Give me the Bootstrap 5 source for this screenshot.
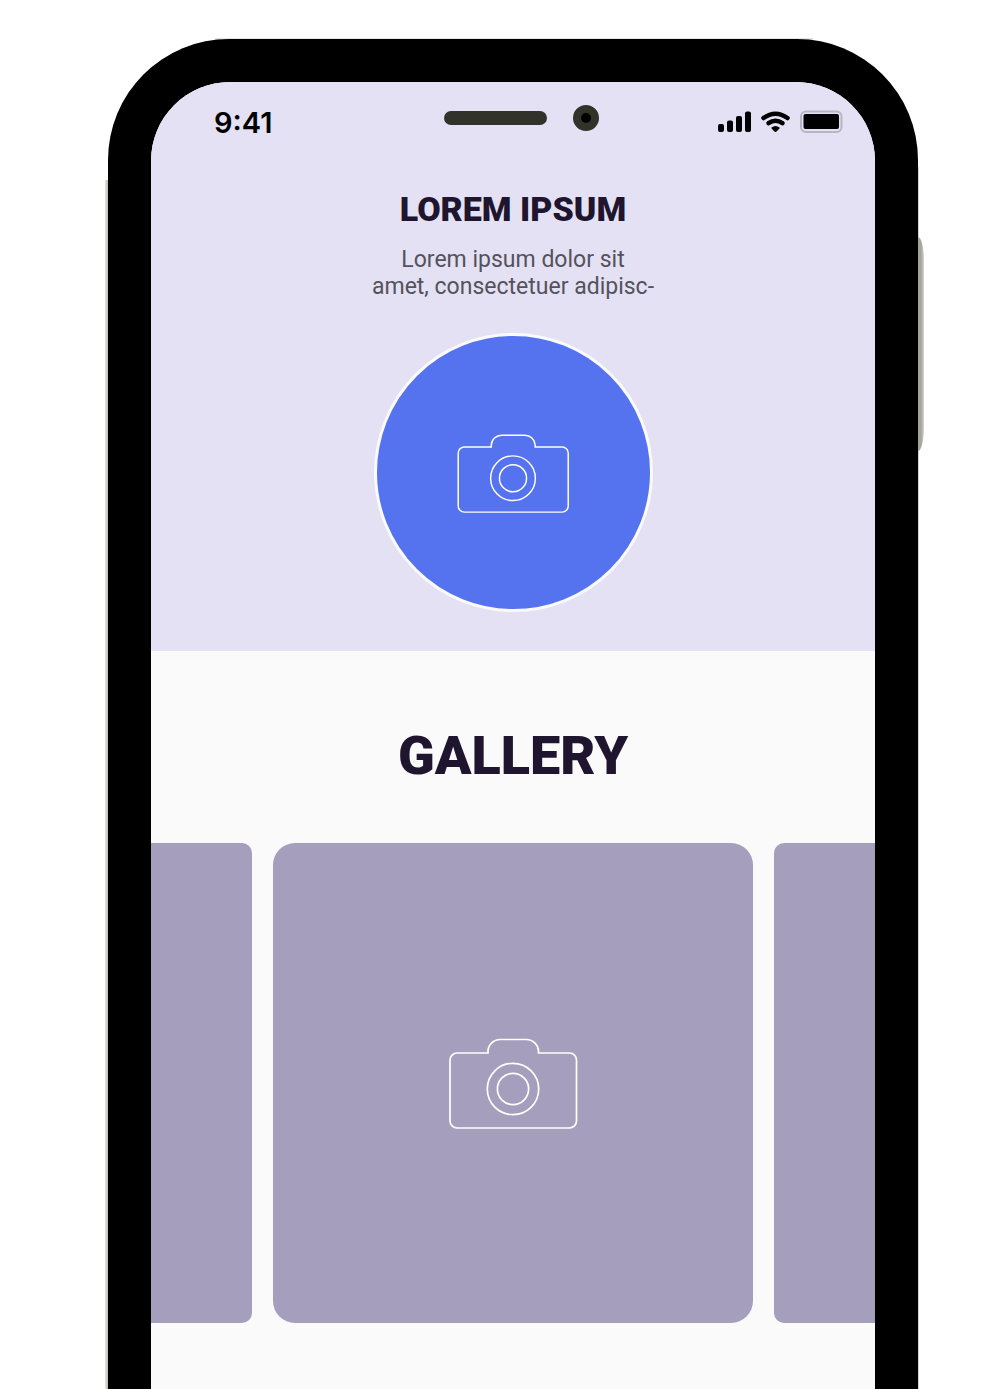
<!DOCTYPE html>
<html lang="en">
<head>
<meta charset="utf-8">
<meta name="viewport" content="width=device-width, initial-scale=1">
<title>Gallery</title>
<link href="https://cdn.jsdelivr.net/npm/bootstrap@5.3.0/dist/css/bootstrap.min.css" rel="stylesheet">
<style>
body { background: #fff; font-family: Roboto, "Liberation Sans", sans-serif; }
.stage { padding: 39px 90px 0 108px; min-height: 100vh; }
.device { isolation: isolate; }
.phone { background: #000; padding: 43px 43px 0; border-radius: 121px 121px 0 0; }
.edge { position: absolute; z-index: -1; }
.edge-top { top: -1px; left: 107px; right: 105px; height: 40px; background: #e4e4e0; }
.edge-left { left: -3px; top: 141px; bottom: 0; width: 4px; background: linear-gradient(90deg, #e6e6e3, #a9aba3); }
.edge-right { right: -1px; top: 128px; bottom: 0; width: 2px; background: #d3d3cf; }
.side-key { right: -6px; top: 198px; width: 12px; height: 214px; background: linear-gradient(90deg, #a5a59c 75%, #d4d4cf); border-radius: 0 6px 6px 0 / 0 24px 24px 0; }
.screen { background: #fafafa; border-radius: 79px 79px 0 0; color: #20152e; }
.profile { background: #e4e1f4; height: 569px; }
.status { height: 79px; padding: 0 32px 0 63px; color: #000; }
.clock { font: 600 29px/36px Inter, sans-serif; padding-top: 2px; }
.sensors { top: 23px; left: 293px; gap: 26px; }
.speaker { width: 103px; height: 14px; border-radius: 7px; background: #31322a; }
.lens { width: 26px; height: 26px; border: 8px solid #31322a; border-radius: 50%; background: #000; }
.name { font-size: 34px; line-height: 42px; font-weight: 900; padding-top: 27px; }
.intro { font-size: 23px; line-height: 27px; color: #55525c; padding-top: 16px; }
.avatar { width: 279px; height: 279px; border: 3px solid #fafafa; background: #5673ef; margin-top: 33px; }
.heading { font-size: 54px; line-height: 64px; font-weight: 900; padding: 73px 0 55px; }
.slides { gap: 21px; padding-bottom: 66px; }
.slide { width: 480px; height: 480px; border-radius: 22px; background: #a69ebd; }
.slide-side { border-radius: 10px; }
.camera { fill: none; stroke: #fff; stroke-width: 1.7; }
</style>
<script src="https://cdn.jsdelivr.net/npm/bootstrap@5.3.0/dist/js/bootstrap.bundle.min.js" defer></script>
</head>
<body>
<svg width="0" height="0" class="position-absolute" aria-hidden="true">
  <symbol id="camera" viewBox="0 0 130 92">
    <path d="M9 16H40V14A12 12 0 0 1 52 2.500H78.500A12 12 0 0 1 90.500 14V16H121.500A7 7 0 0 1 128.500 23V84A7 7 0 0 1 121.500 91H9A7 7 0 0 1 2 84V23A7 7 0 0 1 9 16Z"/>
    <circle cx="65" cy="52" r="25.700"/><circle cx="65" cy="52" r="15.600"/>
  </symbol>
</svg>
<div class="stage">
  <div class="device position-relative">
    <div class="edge edge-top"></div><div class="edge edge-left"></div>
    <div class="edge edge-right"></div><div class="edge side-key"></div>
    <div class="phone">
      <main class="screen overflow-hidden">
        <section class="profile d-flex flex-column align-items-center text-center">
          <div class="status w-100 d-flex justify-content-between align-items-center position-relative">
            <span class="clock">9:41</span>
            <div class="sensors position-absolute d-flex align-items-center"><div class="speaker"></div><div class="lens"></div></div>
            <svg width="126" height="24" viewBox="0 0 126 24" aria-label="Signal, Wi-Fi and battery">
              <g><rect x="1" y="14" width="6" height="8" rx="2"/><rect x="10" y="10.500" width="6" height="11.500" rx="2"/><rect x="19" y="6" width="6" height="16" rx="2"/><rect x="28" y="1.500" width="6" height="20.500" rx="2"/></g>
              <g fill="none" stroke="#000" stroke-width="4.500" stroke-linecap="round"><path d="M46.500 8Q58.500-.5 70.500 8"/><path d="M51.500 13.200Q58.500 8.200 65.500 13.200"/></g>
              <path d="M54.500 17.500Q58.500 14.500 62.500 17.500Q63 18.300 62 19L59.500 21.500Q58.500 22.300 57.500 21.500L55 19Q54 18.300 54.500 17.500Z"/>
              <rect x="84" y="1.500" width="40.500" height="20.500" rx="5" fill="none" stroke="#b8b5c2" stroke-width="2"/>
              <rect x="86.500" y="4" width="35.500" height="15" rx="2"/>
            </svg>
          </div>
          <h1 class="name m-0">LOREM IPSUM</h1>
          <p class="intro mb-0">Lorem ipsum dolor sit<br>amet, consectetuer adipisc-</p>
          <div class="avatar rounded-circle d-flex align-items-center justify-content-center">
            <svg class="camera" width="114" height="80" role="img" aria-label="Profile photo"><use href="#camera"/></svg>
          </div>
        </section>
        <section>
          <h2 class="heading text-center m-0">GALLERY</h2>
          <div class="slides d-flex justify-content-center">
            <div class="slide slide-side flex-shrink-0"></div>
            <div class="slide flex-shrink-0 d-flex align-items-center justify-content-center">
              <svg class="camera" width="130" height="92" role="img" aria-label="Gallery photo"><use href="#camera"/></svg>
            </div>
            <div class="slide slide-side flex-shrink-0"></div>
          </div>
        </section>
      </main>
    </div>
  </div>
</div>
</body>
</html>
